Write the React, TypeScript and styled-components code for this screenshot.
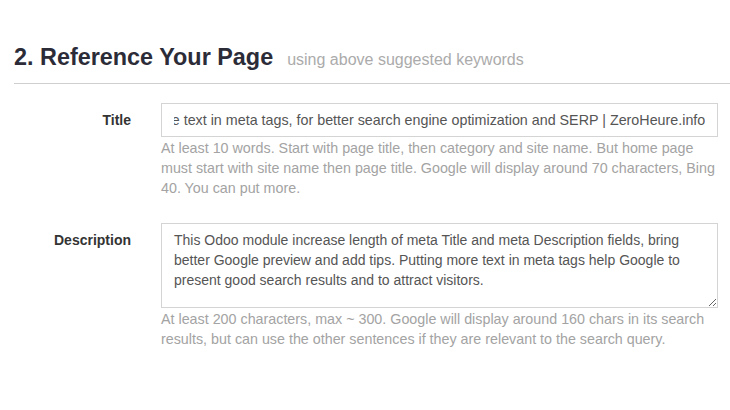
import React, { useLayoutEffect, useRef } from "react";
import styled, { createGlobalStyle } from "styled-components";

const Global = createGlobalStyle`
  html, body { margin: 0; padding: 0; background: #fff; }
  body { font-family: "Liberation Sans", Arial, sans-serif; }
`;

const Page = styled.div`
  padding: 0 0 0 14px;
`;

const Header = styled.div`
  display: flex;
  align-items: baseline;
  gap: 14px;
  padding-top: 40px;
  padding-bottom: 9px;
  border-bottom: 1px solid #cfcfcf;
`;

const Heading = styled.h2`
  margin: 0;
  font-size: 23.4px;
  font-weight: bold;
  color: #2c2c38;
  line-height: 34px;
`;

const Sub = styled.span`
  font-size: 16px;
  color: #ababab;
`;

const Form = styled.div`
  display: flex;
  flex-direction: column;
  gap: 25px;
  padding-top: 19px;
  padding-right: 12px;
`;

const Row = styled.div`
  display: grid;
  grid-template-columns: 117px 1fr;
  column-gap: 30px;
`;

const Label = styled.label`
  text-align: right;
  font-size: 14px;
  font-weight: bold;
  color: #333;
  padding-top: 7px;
  line-height: 20px;
`;

const Field = styled.div`
  display: flex;
  flex-direction: column;
`;

const Input = styled.input`
  box-sizing: border-box;
  width: 100%;
  height: 34px;
  padding: 6px 12px;
  border: 1px solid #d4d4d4;
  border-radius: 0;
  font-family: "Liberation Sans", Arial, sans-serif;
  font-size: 14.3px;
  color: #555;
  outline: none;
`;

const TextArea = styled.textarea`
  box-sizing: border-box;
  width: 100%;
  height: 85px;
  padding: 6px 12px;
  border: 1px solid #d4d4d4;
  border-radius: 0;
  font-family: "Liberation Sans", Arial, sans-serif;
  font-size: 14px;
  line-height: 20px;
  color: #555;
  resize: vertical;
  outline: none;
  display: block;
`;

const Help = styled.p`
  margin: 1px 0 0;
  font-size: 14.3px;
  line-height: 20px;
  color: #a3a3a3;
`;

const titleValue =
  "Odoo Meta Tags Length: put more text in meta tags, for better search engine optimization and SERP | ZeroHeure.info";

const descValue =
  "This Odoo module increase length of meta Title and meta Description fields, bring better Google preview and add tips. Putting more text in meta tags help Google to present good search results and to attract visitors.";

export default function App() {
  const ref = useRef<HTMLInputElement>(null);
  useLayoutEffect(() => {
    const el = ref.current;
    if (el) el.scrollLeft = el.scrollWidth;
    const t = setTimeout(() => {
      if (el) el.scrollLeft = el.scrollWidth;
    }, 50);
    return () => clearTimeout(t);
  }, []);
  return (
    <Page>
      <Global />
      <Header>
        <Heading>2. Reference Your Page</Heading>
        <Sub>using above suggested keywords</Sub>
      </Header>
      <Form>
        <Row>
          <Label>Title</Label>
          <Field>
            <Input ref={ref} defaultValue={titleValue} />
            <Help>
              At least 10 words. Start with page title, then category and site name. But home page
              must start with site name then page title. Google will display around 70 characters,
              Bing 40. You can put more.
            </Help>
          </Field>
        </Row>
        <Row>
          <Label>Description</Label>
          <Field>
            <TextArea defaultValue={descValue} />
            <Help>
              At least 200 characters, max ~ 300. Google will display around 160 chars in its search
              results, but can use the other sentences if they are relevant to the search query.
            </Help>
          </Field>
        </Row>
      </Form>
    </Page>
  );
}
